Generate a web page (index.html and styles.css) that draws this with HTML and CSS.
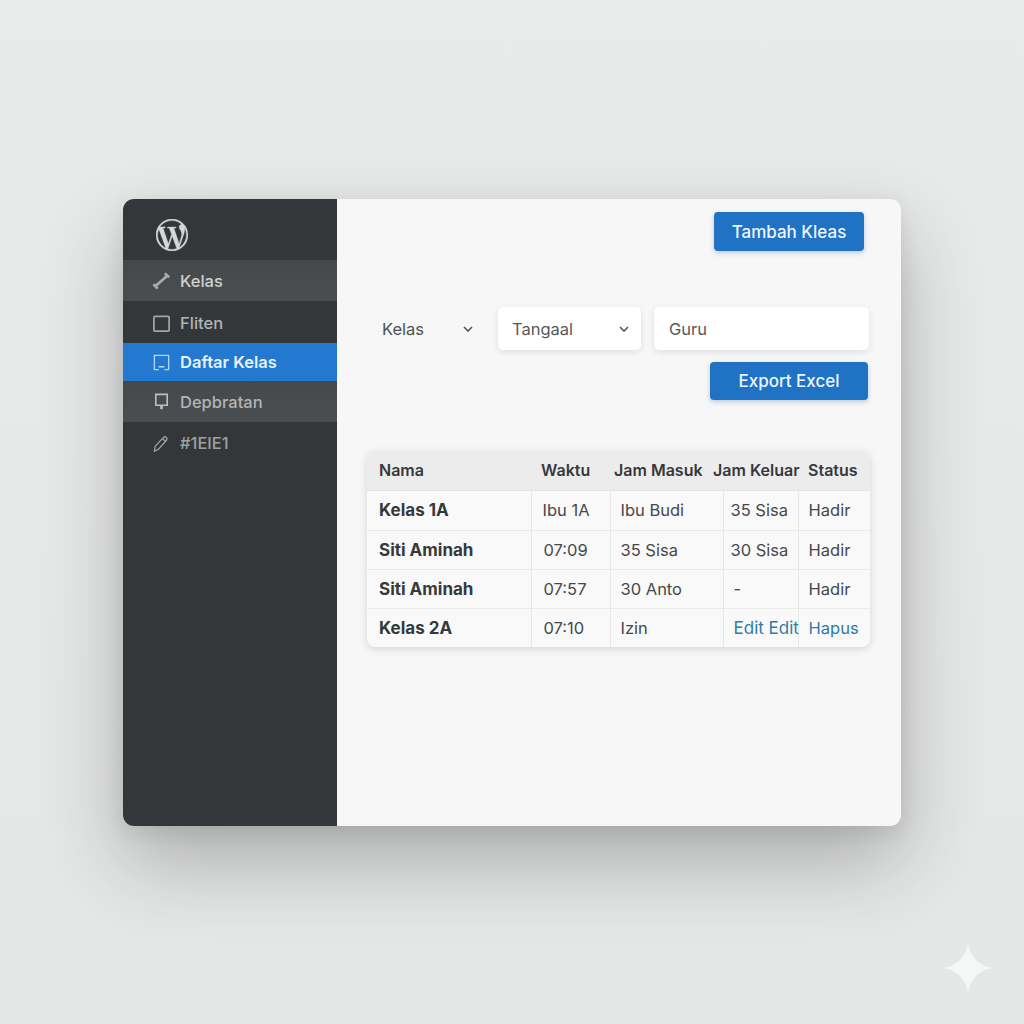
FILE: index.html
```html
<!DOCTYPE html>
<html lang="id">
<head>
<meta charset="utf-8">
<title>Daftar Kelas</title>
<link rel="stylesheet" href="styles.css">
</head>
<body>
<div class="window">
  <aside class="sidebar">
    <div class="logo">
      <svg viewBox="0 0 24 24" width="32" height="32"><path fill="#d5d7d8" stroke="#d5d7d8" stroke-width=".25" d="M21.469 6.825c.84 1.537 1.318 3.3 1.318 5.175 0 3.979-2.156 7.456-5.363 9.325l3.295-9.527c.615-1.54.82-2.771.82-3.864 0-.405-.026-.78-.07-1.11m-7.981.105c.647-.03 1.232-.105 1.232-.105.582-.075.514-.93-.067-.899 0 0-1.755.135-2.88.135-1.064 0-2.85-.15-2.85-.15-.585-.03-.661.855-.075.885 0 0 .54.061 1.125.09l1.68 4.605-2.37 7.08L5.354 6.9c.649-.03 1.234-.1 1.234-.1.585-.075.516-.93-.065-.896 0 0-1.746.138-2.874.138-.2 0-.438-.008-.69-.015C4.911 3.15 8.235 1.215 12 1.215c2.809 0 5.365 1.072 7.286 2.833-.046-.003-.091-.009-.141-.009-1.06 0-1.812.923-1.812 1.914 0 .89.513 1.643 1.06 2.531.411.72.89 1.643.89 2.977 0 .915-.354 1.994-.821 3.479l-1.075 3.585-3.9-11.61.001.014zM12 22.784c-1.059 0-2.081-.153-3.048-.437l3.237-9.406 3.315 9.087c.024.053.05.101.078.149-1.12.393-2.325.609-3.582.609M1.211 12c0-1.564.336-3.05.935-4.39L7.29 21.709C3.694 19.96 1.212 16.271 1.211 12M12 0C5.385 0 0 5.385 0 12s5.385 12 12 12 12-5.385 12-12S18.615 0 12 0"/></svg>
    </div>
    <nav class="nav">
      <a class="item band h41">
        <svg class="ico" viewBox="0 0 20 20"><path d="M1.5 14l4.5 4.5M3.5 16L15.5 5.5M13.5 2.5l4.5 4" fill="none" stroke="#a9abad" stroke-width="2.8"/></svg>
        <span>Kelas</span>
      </a>
      <a class="item h42 dim nudge">
        <svg class="ico" viewBox="0 0 20 20"><rect x="2" y="2.5" width="16" height="15.5" rx="1" fill="none" stroke="#a4a6a8" stroke-width="1.8"/></svg>
        <span>Fliten</span>
      </a>
      <a class="item active h38">
        <svg class="ico" viewBox="0 0 20 20"><path d="M7 17.5H2.5V2.5h15v15H13" fill="none" stroke="#b5d6f3" stroke-width="1.4"/><path d="M7 14.5h6" stroke="#b5d6f3" stroke-width="1.6"/></svg>
        <span>Daftar Kelas</span>
      </a>
      <a class="item band h41 dim">
        <svg class="ico" viewBox="0 0 20 20"><path d="M4 2.5h12v11.5H4z" fill="none" stroke="#bcbebf" stroke-width="1.7"/><path d="M10 14v4" stroke="#bcbebf" stroke-width="2.8"/></svg>
        <span>Depbratan</span>
      </a>
      <a class="item h40 faint nudge">
        <svg class="ico" viewBox="0 0 20 20"><path d="M2.5 18l.8-5 8.5-9.2a2.2 2.2 0 0 1 3.4 2.8l-8.4 9.4zM11 5l3.8 3" fill="none" stroke="#a0a2a4" stroke-width="1.3"/></svg>
        <span>#1EIE1</span>
      </a>
    </nav>
  </aside>
  <main class="content">
    <div class="top-action">
      <button class="btn btn-add">Tambah Kleas</button>
    </div>
    <div class="filters">
      <div class="plain-select"><span>Kelas</span><svg class="chev" viewBox="0 0 12 8"><path d="M2 2l4 4 4-4"/></svg></div>
      <div class="field field-date"><span>Tangaal</span><svg class="chev" viewBox="0 0 12 8"><path d="M2 2l4 4 4-4"/></svg></div>
      <div class="field field-guru"><span>Guru</span></div>
    </div>
    <div class="export-row">
      <button class="btn btn-export">Export Excel</button>
    </div>
    <div class="table-card">
      <table>
        <colgroup><col class="c1"><col class="c2"><col class="c3"><col class="c4"><col class="c5"></colgroup>
        <thead>
          <tr><th class="p12">Nama</th><th class="p10">Waktu</th><th class="p4">Jam Masuk</th><th class="out">Jam Keluar</th><th class="p10">Status</th></tr>
        </thead>
        <tbody>
          <tr><td class="name">Kelas 1A</td><td class="p11">Ibu 1A</td><td class="p10">Ibu Budi</td><td class="p7">35 Sisa</td><td class="p10">Hadir</td></tr>
          <tr><td class="name">Siti Aminah</td><td class="p12b">07:09</td><td class="p10">35 Sisa</td><td class="p7">30 Sisa</td><td class="p10">Hadir</td></tr>
          <tr><td class="name">Siti Aminah</td><td class="p12b">07:57</td><td class="p10">30 Anto</td><td class="p10">-</td><td class="p10">Hadir</td></tr>
          <tr><td class="name">Kelas 2A</td><td class="p12b">07:10</td><td class="p10">Izin</td><td class="p10 link edit">Edit Edit</td><td class="p10 link">Hapus</td></tr>
        </tbody>
      </table>
    </div>
  </main>
</div>
<svg class="spark" viewBox="0 0 50 50"><path d="M25 0C27 14 36 23 50 25C36 27 27 36 25 50C23 36 14 27 0 25C14 23 23 14 25 0z" fill="#f5f6f6"/></svg>
</body>
</html>
```
FILE: styles.css
```css
* { box-sizing: border-box; }
html, body { margin: 0; height: 100%; }
body {
  position: relative;
  width: 1024px;
  height: 1024px;
  overflow: hidden;
  padding: 199px 123px 198px;
  background: linear-gradient(180deg, #e9eaea 0%, #e5e6e6 100%);
  font-family: Inter, "Liberation Sans", sans-serif;
}
.window {
  display: flex;
  width: 778px;
  height: 627px;
  border-radius: 11px;
  overflow: hidden;
  background: #f7f7f7;
  box-shadow: 0 36px 80px rgba(40, 42, 44, .3), 0 6px 20px rgba(40, 42, 44, .1);
}
.sidebar { width: 214px; flex: none; background: #33373a; }
.logo { height: 61px; padding: 20px 0 0 33px; }
.logo svg { display: block; }
.nav { display: flex; flex-direction: column; }
.item {
  display: flex;
  align-items: center;
  gap: 9px;
  padding-left: 29px;
  font-size: 16.5px;
  font-weight: 500;
  color: #cfd1d2;
}
.nudge { padding-top: 2px; }
.ico { width: 19px; height: 19px; flex: none; }
.h38 { height: 38px; }
.h40 { height: 40px; }
.h41 { height: 41px; }
.h42 { height: 42px; }
.band { background: linear-gradient(180deg, #46494c, #4b4e50); }
.dim { color: #b2b4b6; }
.faint { color: #9fa1a3; }
.active { background: #2379cf; color: #e6f2fc; font-weight: 600; }
.content { flex: 1; display: flex; flex-direction: column; padding: 13px 30px 0 30px; }
.btn {
  display: block;
  border: 0;
  border-radius: 4px;
  background: #1f72c4;
  color: #eef6fd;
  font: 500 17px Inter, "Liberation Sans", sans-serif;
  box-shadow: 0 2px 5px rgba(30, 90, 150, .28);
}
.top-action { display: flex; justify-content: flex-end; padding-right: 7px; }
.btn-add { width: 150px; height: 39px; }
.filters { display: flex; align-items: stretch; margin-top: 56px; height: 43px; }
.plain-select, .field {
  display: flex;
  align-items: center;
  justify-content: space-between;
  font-size: 16.5px;
  color: #55585a;
}
.plain-select { width: 131px; padding: 0 24px 0 15px; color: #4e5153; }
.field {
  background: #fff;
  border-radius: 5px;
  box-shadow: 0 2px 7px rgba(0, 0, 0, .1);
  padding: 0 11px 0 14px;
}
.field-date { width: 143px; }
.field-guru { width: 215px; margin-left: 13px; padding-left: 15px; }
.chev { width: 12px; height: 8px; fill: none; stroke: #55585a; stroke-width: 1.6; }
.export-row { display: flex; justify-content: flex-end; margin-top: 12px; margin-right: 3px; }
.btn-export { width: 158px; height: 38px; }
.table-card {
  margin-top: 51px;
  width: 503px;
  border-radius: 8px;
  overflow: hidden;
  background: #f9f9f9;
  box-shadow: 0 2px 8px rgba(0, 0, 0, .14);
}
table { width: 503px; border-collapse: collapse; table-layout: fixed; font-size: 16.5px; color: #46494b; }
.c1 { width: 164px; }
.c2 { width: 79px; }
.c3 { width: 113px; }
.c4 { width: 75px; }
.c5 { width: 72px; }
th {
  height: 39px;
  background: #ececec;
  border-bottom: 1px solid #e2e3e3;
  font-size: 16px;
  font-weight: 600;
  color: #36393b;
  text-align: left;
  white-space: nowrap;
}
td {
  height: 39px;
  border-top: 1px solid #ebebeb;
  border-left: 1px solid #e8e8e8;
  white-space: nowrap;
}
tbody tr:first-child td { border-top: 0; height: 40px; }
td.name { border-left: 0; padding-left: 12px; font-size: 17px; font-weight: 700; color: #36393b; }
.out { padding: 0; text-indent: -10px; }
.p4 { padding-left: 4px; padding-right: 0; }
.p7 { padding-left: 7px; padding-right: 0; }
.p10 { padding-left: 10px; padding-right: 0; }
.p11 { padding-left: 11px; padding-right: 0; }
.p12 { padding-left: 12px; }
.p12b { padding-left: 12px; padding-right: 0; }
.link { color: #2f7ca8; }
.edit { font-size: 17px; }
.spark { position: absolute; left: 943px; top: 943px; width: 50px; height: 50px; }
```
